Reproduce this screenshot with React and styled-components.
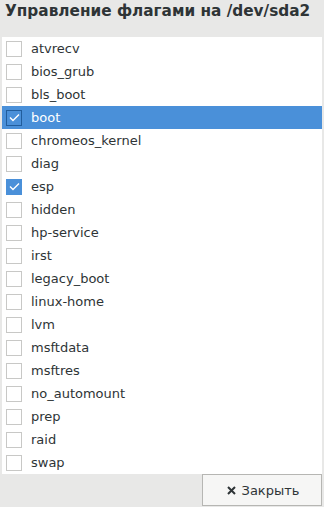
import styled, { createGlobalStyle } from "styled-components";

const flags = [
  { name: "atvrecv" },
  { name: "bios_grub" },
  { name: "bls_boot" },
  { name: "boot", checked: true, selected: true },
  { name: "chromeos_kernel" },
  { name: "diag" },
  { name: "esp", checked: true },
  { name: "hidden" },
  { name: "hp-service" },
  { name: "irst" },
  { name: "legacy_boot" },
  { name: "linux-home" },
  { name: "lvm" },
  { name: "msftdata" },
  { name: "msftres" },
  { name: "no_automount" },
  { name: "prep" },
  { name: "raid" },
  { name: "swap" },
];

const GlobalStyle = createGlobalStyle`
  html, body {
    margin: 0;
    padding: 0;
    background: #e8e8e7;
  }
  body {
    font-family: "DejaVu Sans", sans-serif;
    color: #2e3436;
  }
`;

const App = () => {
  return (
    <>
      <GlobalStyle />
      <Dialog>
        <Title>Управление флагами на /dev/sda2</Title>
        <FlagList>
          {flags.map((flag) => (
            <Row key={flag.name} $selected={flag.selected}>
              <Check $checked={flag.checked} $selected={flag.selected}>
                {flag.checked && (
                  <svg width="11" height="9" viewBox="0 0 11 9">
                    <path
                      d="M1 4.5 L4 7.5 L10 1.5"
                      fill="none"
                      stroke="#fff"
                      strokeWidth="1.4"
                    />
                  </svg>
                )}
              </Check>
              <Label>{flag.name}</Label>
            </Row>
          ))}
        </FlagList>
        <Footer>
          <CloseButton>
            <svg width="9" height="9" viewBox="0 0 9 9">
              <path
                d="M1 1 L8 8 M8 1 L1 8"
                stroke="#2e3436"
                strokeWidth="2"
              />
            </svg>
            Закрыть
          </CloseButton>
        </Footer>
      </Dialog>
    </>
  );
};

const Dialog = styled.div`
  width: 324px;
  height: 507px;
  display: flex;
  flex-direction: column;
  background: #e8e8e7;
`;

const Title = styled.div`
  height: 37px;
  padding: 1px 0 0 5px;
  box-sizing: border-box;
  font-size: 15.3px;
  font-weight: bold;
  line-height: 20px;
  color: #2e3436;
  white-space: nowrap;
`;

const FlagList = styled.ul`
  list-style: none;
  margin: 0 2px 0 2px;
  padding: 0;
  background: #fff;
`;

const Row = styled.li`
  height: 23px;
  display: flex;
  align-items: center;
  background: ${(p) => (p.$selected ? "#4a90d9" : "transparent")};
  color: ${(p) => (p.$selected ? "#fff" : "#2e3436")};
`;

const Check = styled.span`
  width: 14px;
  height: 14px;
  margin-left: 4px;
  border: 1px solid
    ${(p) => (p.$selected ? "#215d9c" : p.$checked ? "#4a90d9" : "#c8c8c6")};
  background: ${(p) => (p.$checked ? "#4a90d9" : "#fff")};
  display: flex;
  align-items: center;
  justify-content: center;
  flex-shrink: 0;
`;

const Label = styled.span`
  margin-left: 9px;
  font-size: 13px;
  line-height: 23px;
`;

const Footer = styled.div`
  display: flex;
  justify-content: flex-end;
  padding: 0 2px 0 0;
`;

const CloseButton = styled.button`
  width: 120px;
  height: 32px;
  display: flex;
  align-items: center;
  justify-content: center;
  gap: 6px;
  background: #f6f6f5;
  border: 1px solid #b6b6b3;
  border-radius: 0;
  font-family: "DejaVu Sans", sans-serif;
  font-size: 13px;
  color: #2e3436;
  padding: 0 0 0 2px;
`;

export default App;
